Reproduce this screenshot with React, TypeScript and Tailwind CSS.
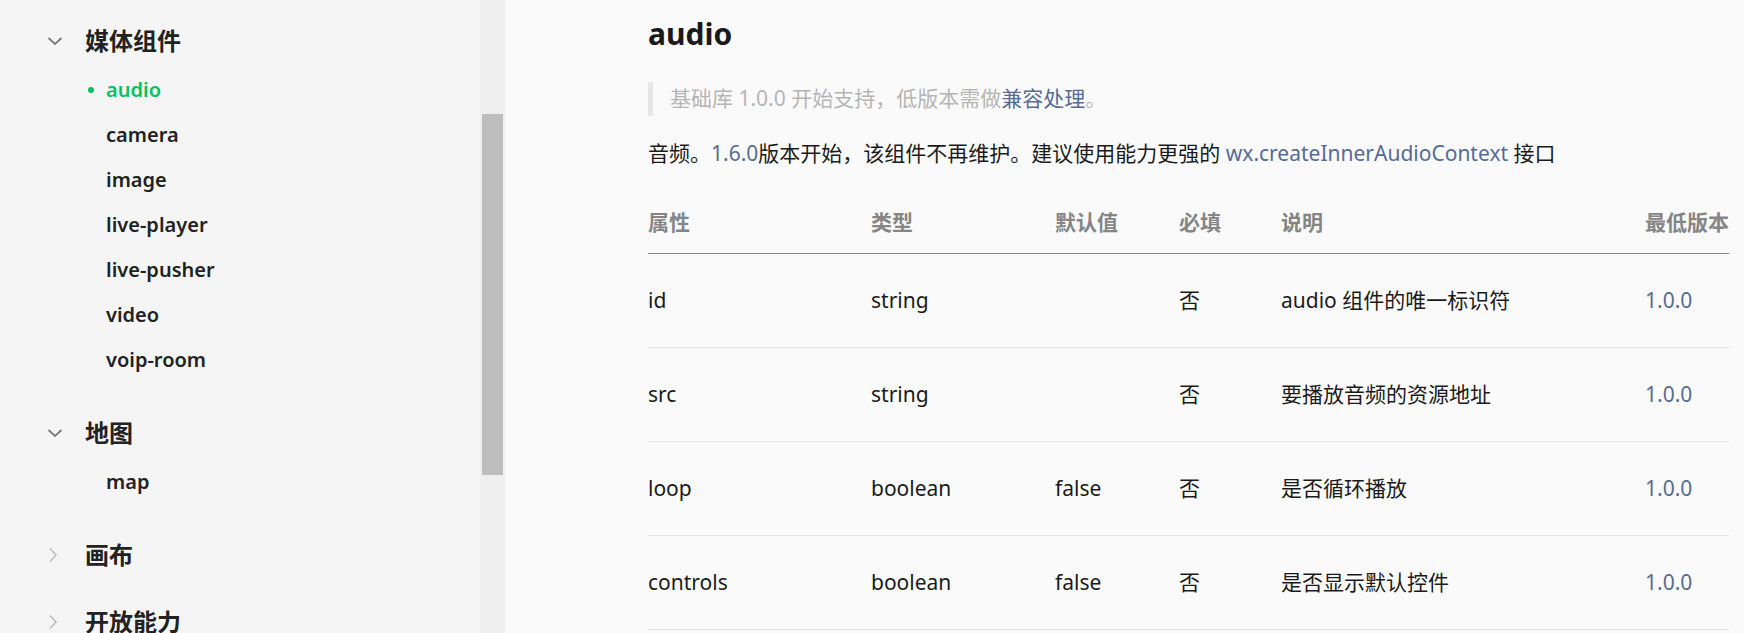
import React from "react"

const font = { fontFamily: '"Noto Sans", "Noto Sans CJK SC", sans-serif' }

interface NavGroup {
  title: string
  open: boolean
  items: string[]
  gap: string
}

const groups: NavGroup[] = [
  { title: "媒体组件", open: true, items: ["audio", "camera", "image", "live-player", "live-pusher", "video", "voip-room"], gap: "mt-0" },
  { title: "地图", open: true, items: ["map"], gap: "mt-[25px]" },
  { title: "画布", open: false, items: [], gap: "mt-[25px]" },
  { title: "开放能力", open: false, items: [], gap: "mt-[15px]" },
]

const rows = [
  { name: "id", type: "string", def: "", req: "否", desc: "audio 组件的唯一标识符", ver: "1.0.0" },
  { name: "src", type: "string", def: "", req: "否", desc: "要播放音频的资源地址", ver: "1.0.0" },
  { name: "loop", type: "boolean", def: "false", req: "否", desc: "是否循环播放", ver: "1.0.0" },
  { name: "controls", type: "boolean", def: "false", req: "否", desc: "是否显示默认控件", ver: "1.0.0" },
]

function ChevronDown() {
  return (
    <svg width="16" height="10" viewBox="0 0 16 10" fill="none">
      <polyline points="1.5,2 8,8 14.5,2" stroke="#7a7a7a" strokeWidth="1.8" />
    </svg>
  )
}

function ChevronRight() {
  return (
    <svg width="10" height="16" viewBox="0 0 10 16" fill="none" className="ml-[1px]">
      <polyline points="2,1.5 8,8 2,14.5" stroke="#c2c2c2" strokeWidth="1.8" />
    </svg>
  )
}

function Sidebar() {
  return (
    <aside className="w-[480px] shrink-0 bg-[#f5f5f5] pt-[15px]">
      {groups.map((g) => (
        <div key={g.title} className={g.gap}>
          <div className="flex h-[52px] items-center pl-[47px]">
            <span className="flex w-[38px] items-center">{g.open ? <ChevronDown /> : <ChevronRight />}</span>
            <span className="text-[24px] font-bold text-[#222]">{g.title}</span>
          </div>
          {g.items.map((item) => {
            const active = item === "audio"
            return (
              <div key={item} className="flex h-[45px] items-center pl-[88px]">
                <span className={`mr-[12px] h-[6px] w-[6px] rounded-full ${active ? "bg-[#07c160]" : "bg-transparent"}`} />
                <span className={`text-[20px] font-semibold ${active ? "text-[#07c160]" : "text-[#222]"}`}>{item}</span>
              </div>
            )
          })}
        </div>
      ))}
    </aside>
  )
}

function Scrollbar() {
  return (
    <div className="w-[25px] shrink-0 bg-[#efefef] pt-[114px] pl-[2px]">
      <div className="h-[361px] w-[21px] bg-[#bdbdbd]" />
    </div>
  )
}

const cols = "grid grid-cols-[223px_184px_124px_102px_364px_1fr]"
const cell = "flex items-center whitespace-nowrap"

export default function App() {
  return (
    <div className="flex h-[633px] w-[1744px] overflow-hidden bg-[#fafafa]" style={font}>
      <Sidebar />
      <Scrollbar />

      <main className="flex-1 pl-[143px] pt-[14px] text-[#1a1a1a]">
        <h1 className="text-[30px] font-bold leading-[40px] text-[#1a1a1a]">audio</h1>

        <div className="mt-[28px] flex h-[34px] items-center border-l-[5px] border-[#e6e6e6] pl-[17px] text-[21px] text-[#b5b5b5]">
          基础库 1.0.0 开始支持，低版本需做<span className="text-[#576b95]">兼容处理</span>。
        </div>

        <p className="mt-[22px] text-[21px] leading-[30px]">
          音频。<span className="text-[#576b95]">1.6.0</span>版本开始，该组件不再维护。建议使用能力更强的{" "}
          <span className="text-[#576b95]">wx.createInnerAudioContext</span> 接口
        </p>

        {/* table */}
        <div className="mt-[25px] w-[1081px] text-[21px]">
          <div className={`${cols} h-[61px] border-b border-[#8a8a8a] font-bold text-[#858585]`}>
            <div className={cell}>属性</div>
            <div className={cell}>类型</div>
            <div className={cell}>默认值</div>
            <div className={cell}>必填</div>
            <div className={cell}>说明</div>
            <div className={cell}>最低版本</div>
          </div>
          {rows.map((r) => (
            <div key={r.name} className={`${cols} h-[94px] border-b border-[#e5e5e5]`}>
              <div className={cell}>{r.name}</div>
              <div className={cell}>{r.type}</div>
              <div className={cell}>{r.def}</div>
              <div className={cell}>{r.req}</div>
              <div className={cell}>{r.desc}</div>
              <div className={`${cell} text-[#576b95]`}>{r.ver}</div>
            </div>
          ))}
        </div>
      </main>
    </div>
  )
}
